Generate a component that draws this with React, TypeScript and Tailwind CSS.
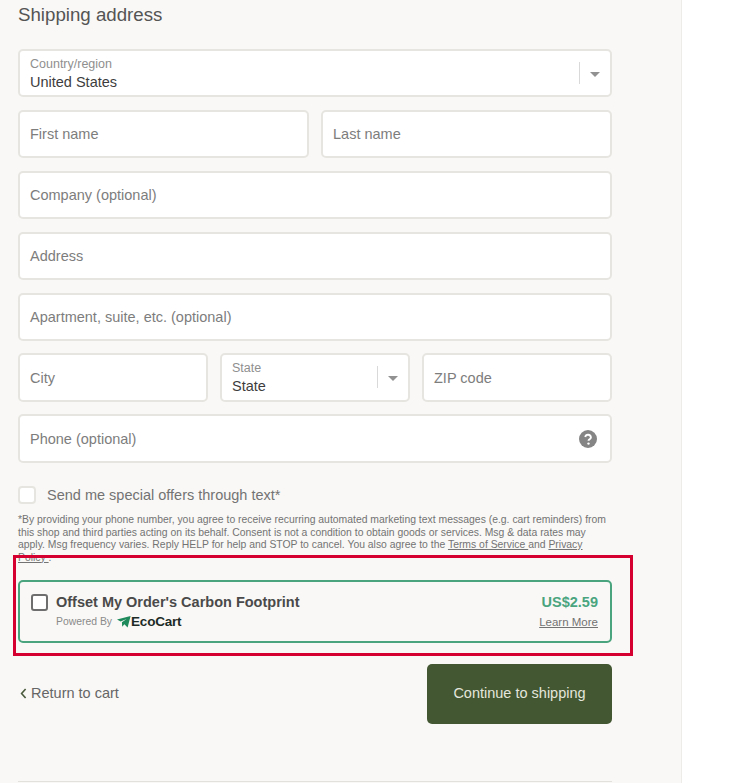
const FONT = "font-['Liberation_Sans',Arial,sans-serif]"

function TextField({ label, className = '', children }: { label: string; className?: string; children?: React.ReactNode }) {
  return (
    <div className={'relative min-w-0 flex items-center rounded-[5px] border-2 border-[#e7e5e0] bg-white pl-[10px] pr-3 ' + className}>
      <span className="pt-[2px] text-[14.5px] text-[#7d7d7d]">{label}</span>
      {children}
    </div>
  )
}

function SelectField({ label, value, className = '' }: { label: string; value: string; className?: string }) {
  return (
    <div className={'relative min-w-0 flex flex-col justify-center rounded-[5px] border-2 border-[#e7e5e0] bg-white pl-[10px] ' + className}>
      <span className="text-[12.5px] leading-[14px] text-[#8f8f8f]">{label}</span>
      <span className="mt-[2px] text-[14.5px] leading-[18px] text-[#3d3d3d]">{value}</span>
      <span className="absolute right-[30px] top-[11px] h-[22px] w-px bg-[#d9d9d9]" />
      <span className="absolute right-[10px] top-[21px] h-0 w-0 border-x-[5px] border-t-[5px] border-x-transparent border-t-[#919191]" />
    </div>
  )
}

function EcoCartMark() {
  return (
    <svg width="14" height="12" viewBox="0 0 14 12">
      <path d="M0 3.6 13.6 0 10.6 11.4 7.4 8.2 5.2 10.8 4.9 6.3 9.6 3 3.6 5.4Z" fill="#1f8a5b" />
    </svg>
  )
}

export default function App() {
  return (
    <div className={'h-[783px] overflow-hidden bg-white ' + FONT}>
      <div className="relative h-full w-[682px] border-r border-[#eeece8] bg-[#f9f8f6] pl-[18px] pr-[69px]">
        <h2 className="pt-[4px] text-[18.7px] leading-[21px] text-[#545454]">Shipping address</h2>

        <div className="mt-[24px] flex w-[594px] flex-col gap-[13px]">
          <SelectField label="Country/region" value="United States" className="h-[48px] pt-[2px]" />
          <div className="grid grid-cols-2 gap-3">
            <TextField label="First name" className="h-[48px]" />
            <TextField label="Last name" className="h-[48px]" />
          </div>
          <TextField label="Company (optional)" className="h-[48px]" />
          <TextField label="Address" className="h-[48px]" />
          <TextField label="Apartment, suite, etc. (optional)" className="h-[48px]" />
          <div className="-mt-px grid grid-cols-3 gap-3">
            <TextField label="City" className="h-[49px]" />
            <SelectField label="State" value="State" className="h-[49px]" />
            <TextField label="ZIP code" className="h-[49px]" />
          </div>
          <TextField label="Phone (optional)" className="-mt-px h-[49px]">
            <svg viewBox="0 0 18 18" className="absolute right-[13px] top-[14px] h-[18px] w-[18px]">
              <circle cx="9" cy="9" r="9" fill="#858585" />
              <path d="M6.2 7a2.9 2.9 0 0 1 5.7.4c0 1.8-2.4 1.9-2.4 3.4" fill="none" stroke="#fff" strokeWidth="1.9" />
              <circle cx="9.5" cy="13.6" r="1.2" fill="#fff" />
            </svg>
          </TextField>
        </div>

        <label className="mt-[23px] flex items-center gap-[11px]">
          <span className="h-[18px] w-[18px] rounded-[4px] border-2 border-[#e7e5e0] bg-white" />
          <span className="text-[14.5px] leading-[18px] text-[#737373]">Send me special offers through text*</span>
        </label>

        <p className="mt-[10px] w-[593px] text-[10.4px] leading-[12.5px] text-[#737373]">
          *By providing your phone number, you agree to receive recurring automated marketing text messages (e.g. cart reminders) from this shop and third parties acting on its behalf. Consent is not a condition to obtain goods or services. Msg &amp; data rates may apply. Msg frequency varies. Reply HELP for help and STOP to cancel. You also agree to the <span className="underline">Terms of Service </span>and <span className="underline">Privacy Policy </span>.
        </p>

        <div className="mt-[16px] flex h-[63px] w-[594px] justify-between rounded-[5px] border-2 border-[#4aa57f] pl-[11px] pr-[12px] pt-[11px]">
          <div className="flex gap-[8px]">
            <span className="mt-[1px] h-[17px] w-[17px] rounded-[3px] border-2 border-[#6e6e6e] bg-white" />
            <div className="flex flex-col">
              <span className="text-[14.5px] font-bold leading-[19px] text-[#4a4a4a]">Offset My Order's Carbon Footprint</span>
              <span className="mt-[1px] flex items-center text-[10.4px] leading-[18px] text-[#8a8a8a]">
                Powered By
                <span className="ml-[5px] flex items-center text-[13.5px] font-bold tracking-[-0.2px] text-[#1d2b26]">
                  <EcoCartMark />
                  EcoCart
                </span>
              </span>
            </div>
          </div>
          <div className="flex flex-col items-end">
            <span className="text-[14.5px] font-bold leading-[19px] text-[#4aa57f]">US$2.59</span>
            <span className="mt-[1px] text-[11.5px] leading-[18px] text-[#737373] underline">Learn More</span>
          </div>
        </div>

        <div className="mt-[21px] flex w-[594px] items-center justify-between">
          <span className="ml-[2px] flex items-center gap-[4px] text-[14.5px] text-[#666666]">
            <svg width="7" height="11" viewBox="0 0 7 11" className="mt-[-1px]">
              <path d="M5.6 1 1.6 5.5l4 4.5" fill="none" stroke="#4a5a3c" strokeWidth="1.6" />
            </svg>
            Return to cart
          </span>
          <button className="h-[60px] w-[185px] rounded-[5px] bg-[#435733] text-[14.5px] text-[#e3e6dc]">Continue to shipping</button>
        </div>

        <div className="mt-[57px] h-px w-[594px] bg-[#e3e1dc]" />

        {/* red annotation drawn over the screenshot */}
        <div className="pointer-events-none absolute left-[13px] top-[555px] h-[101px] w-[620px] border-[3px] border-[#d5002f]" />
      </div>
    </div>
  )
}
